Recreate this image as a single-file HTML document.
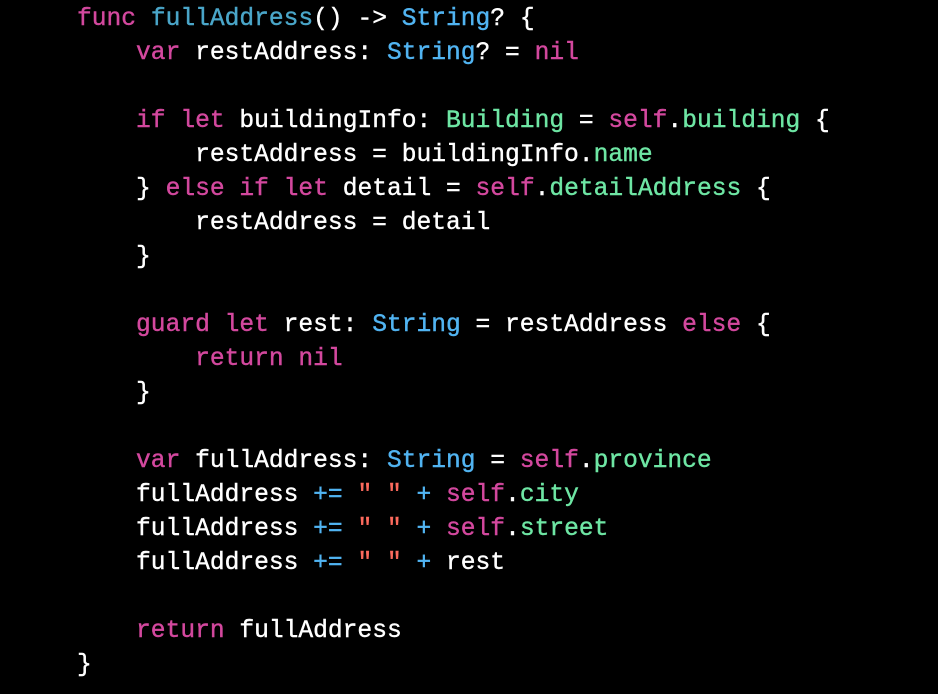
<!DOCTYPE html>
<html><head><style>
html,body{margin:0;padding:0;background:#000;width:938px;height:694px;overflow:hidden}
pre{margin:0;position:absolute;left:77px;top:3px;font-family:"Liberation Mono",monospace;font-size:24.6px;line-height:34px;color:#fff;-webkit-text-stroke:0.4px currentColor}
.k{color:#d3489e}.d{color:#4aa6c9}.t{color:#51b4f2}.g{color:#6ee6a4}.s{color:#fc6a5d}.o{color:#51b4f2}
</style></head><body><pre><span class="k">func</span> <span class="d">fullAddress</span>() -&gt; <span class="t">String</span>? {
    <span class="k">var</span> restAddress: <span class="t">String</span>? = <span class="k">nil</span>

    <span class="k">if</span> <span class="k">let</span> buildingInfo: <span class="g">Building</span> = <span class="k">self</span>.<span class="g">building</span> {
        restAddress = buildingInfo.<span class="g">name</span>
    } <span class="k">else</span> <span class="k">if</span> <span class="k">let</span> detail = <span class="k">self</span>.<span class="g">detailAddress</span> {
        restAddress = detail
    }

    <span class="k">guard</span> <span class="k">let</span> rest: <span class="t">String</span> = restAddress <span class="k">else</span> {
        <span class="k">return</span> <span class="k">nil</span>
    }

    <span class="k">var</span> fullAddress: <span class="t">String</span> = <span class="k">self</span>.<span class="g">province</span>
    fullAddress <span class="o">+=</span> <span class="s">" "</span> <span class="o">+</span> <span class="k">self</span>.<span class="g">city</span>
    fullAddress <span class="o">+=</span> <span class="s">" "</span> <span class="o">+</span> <span class="k">self</span>.<span class="g">street</span>
    fullAddress <span class="o">+=</span> <span class="s">" "</span> <span class="o">+</span> rest

    <span class="k">return</span> fullAddress
}</pre></body></html>
